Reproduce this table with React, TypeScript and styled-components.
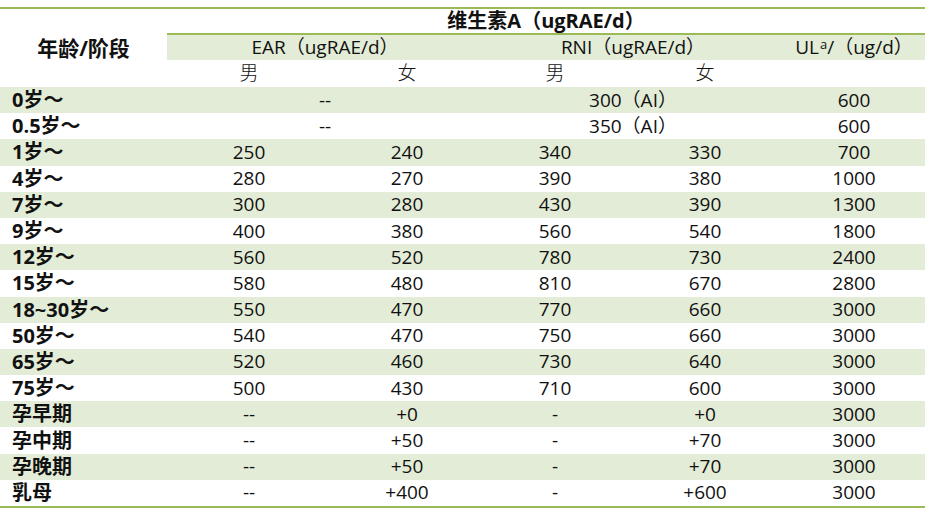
import React from "react";
import styled, { createGlobalStyle } from "styled-components";

const GlobalStyle = createGlobalStyle`
  html, body {
    margin: 0;
    padding: 0;
    background: #ffffff;
  }
  body {
    font-family: "Open Sans", "Noto Sans CJK SC", sans-serif;
    color: #111111;
    overflow: hidden;
  }
`;

const LINE = "#9bbb59";
const BAND = "#e3ecd6";

const Page = styled.div`
  padding-top: 7px;
`;

const Table = styled.table`
  width: 925px;
  table-layout: fixed;
  border-collapse: separate;
  border-spacing: 0;
  font-size: 19px;
  border-bottom: 2px solid ${LINE};
`;

const HeadCell = styled.th<{ $top?: boolean; $band?: boolean; $light?: boolean; $h?: number }>`
  padding: 0;
  height: ${(p) => p.$h ?? 25}px;
  text-align: center;
  vertical-align: middle;
  font-weight: ${(p) => (p.$light ? 300 : 400)};
  line-height: 1;
  background: ${(p) => (p.$band ? BAND : "transparent")};
  border-top: ${(p) => (p.$top ? `2px solid ${LINE}` : "0")};
  white-space: nowrap;
`;

const Title = styled(HeadCell)`
  font-weight: 700;
  font-size: 20px;
`;

const AgeHead = styled(HeadCell)`
  font-weight: 700;
  font-size: 21px;
`;

const Row = styled.tr<{ $striped: boolean }>`
  height: 26.2px;
  background: ${(p) => (p.$striped ? BAND : "transparent")};
`;

const Label = styled.td`
  padding: 0 0 0 12px;
  text-align: left;
  font-weight: 700;
  font-size: 20px;
  line-height: 1;
  white-space: nowrap;
`;

const Cell = styled.td`
  padding: 0;
  text-align: center;
  line-height: 1;
  white-space: nowrap;
`;

const Sup = styled.sup`
  font-size: 13px;
  vertical-align: 5px;
  margin-left: 1px;
`;

type DataRow = {
  label: string;
  values: string[];
  span?: boolean;
};

const rows: DataRow[] = [
  { label: "0岁～", values: ["--", "300（AI）", "600"], span: true },
  { label: "0.5岁～", values: ["--", "350（AI）", "600"], span: true },
  { label: "1岁～", values: ["250", "240", "340", "330", "700"] },
  { label: "4岁～", values: ["280", "270", "390", "380", "1000"] },
  { label: "7岁～", values: ["300", "280", "430", "390", "1300"] },
  { label: "9岁～", values: ["400", "380", "560", "540", "1800"] },
  { label: "12岁～", values: ["560", "520", "780", "730", "2400"] },
  { label: "15岁～", values: ["580", "480", "810", "670", "2800"] },
  { label: "18~30岁～", values: ["550", "470", "770", "660", "3000"] },
  { label: "50岁～", values: ["540", "470", "750", "660", "3000"] },
  { label: "65岁～", values: ["520", "460", "730", "640", "3000"] },
  { label: "75岁～", values: ["500", "430", "710", "600", "3000"] },
  { label: "孕早期", values: ["--", "+0", "-", "+0", "3000"] },
  { label: "孕中期", values: ["--", "+50", "-", "+70", "3000"] },
  { label: "孕晚期", values: ["--", "+50", "-", "+70", "3000"] },
  { label: "乳母", values: ["--", "+400", "-", "+600", "3000"] },
];

export default function App() {
  return (
    <Page>
      <GlobalStyle />
      <Table>
        <colgroup>
          <col style={{ width: 167 }} />
          <col style={{ width: 164 }} />
          <col style={{ width: 152 }} />
          <col style={{ width: 144 }} />
          <col style={{ width: 156 }} />
          <col style={{ width: 142 }} />
        </colgroup>
        <thead>
          <tr>
            <AgeHead rowSpan={3} $top>
              年龄/阶段
            </AgeHead>
            <Title colSpan={5} $top $h={24}>
              维生素A（ugRAE/d）
            </Title>
          </tr>
          <tr>
            <HeadCell colSpan={2} $top $band>
              EAR（ugRAE/d）
            </HeadCell>
            <HeadCell colSpan={2} $top $band>
              RNI（ugRAE/d）
            </HeadCell>
            <HeadCell $top $band>
              UL<Sup>a</Sup>/（ug/d）
            </HeadCell>
          </tr>
          <tr>
            <HeadCell $light $h={27}>男</HeadCell>
            <HeadCell $light $h={27}>女</HeadCell>
            <HeadCell $light $h={27}>男</HeadCell>
            <HeadCell $light $h={27}>女</HeadCell>
            <HeadCell $h={27} />
          </tr>
        </thead>
        <tbody>
          {rows.map((r, i) => (
            <Row key={r.label} $striped={i % 2 === 0}>
              <Label>{r.label}</Label>
              {r.span ? (
                <>
                  <Cell colSpan={2}>{r.values[0]}</Cell>
                  <Cell colSpan={2}>{r.values[1]}</Cell>
                  <Cell>{r.values[2]}</Cell>
                </>
              ) : (
                r.values.map((v, j) => <Cell key={j}>{v}</Cell>)
              )}
            </Row>
          ))}
        </tbody>
      </Table>
    </Page>
  );
}
